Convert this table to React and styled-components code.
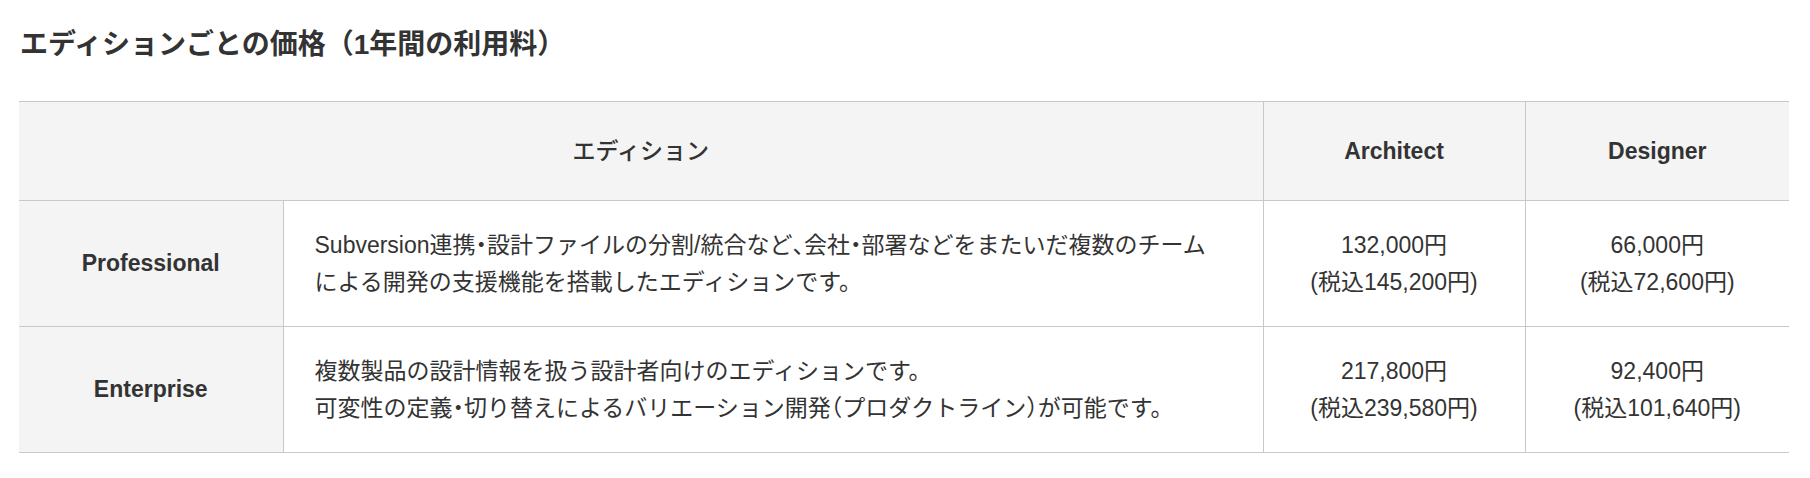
import styled, { createGlobalStyle } from 'styled-components';

const GlobalStyle = createGlobalStyle`
    body {
        margin: 0;
        background: #fff;
        color: #333;
        font-family: "Liberation Sans", Arial, "Noto Sans CJK JP", sans-serif;
    }
`;

const Section = styled.section`
    padding: 23px 21px 0 19px;
`;

const Title = styled.h2`
    margin: 0 0 35px 1px;
    font-size: 28px;
    line-height: 43px;
    font-weight: 700;
    color: #333;
`;

const PriceTable = styled.table`
    width: 1770px;
    border-collapse: collapse;
    table-layout: fixed;
    font-size: 23px;
    line-height: 37px;
`;

const Row = styled.tr`
    border-top: 1px solid #c8c8c8;
    border-bottom: 1px solid #c8c8c8;
`;

const HeadCell = styled.th`
    height: 98px;
    padding: 0;
    background: #f4f4f4;
    font-weight: ${p => (p.$jp ? 500 : 700)};
    text-align: center;
    vertical-align: middle;
    & + & {
        border-left: 1px solid #c8c8c8;
    }
`;

const EditionCell = styled.th`
    height: 125px;
    padding: 0;
    background: #f4f4f4;
    font-weight: 700;
    text-align: center;
    border-right: 1px solid #c8c8c8;
`;

const DescCell = styled.td`
    padding: 0 20px 0 31px;
    border-right: 1px solid #c8c8c8;
    vertical-align: middle;
    white-space: nowrap;
`;

const PriceCell = styled.td`
    padding: 0;
    text-align: center;
    vertical-align: middle;
    & + & {
        border-left: 1px solid #c8c8c8;
    }
`;

// 約物を半角幅で組む
const Punct = styled.span`
    font-feature-settings: "halt";
`;

const rows = [
    {
        name: 'Professional',
        desc: ['Subversion連携・設計ファイルの分割/統合など、会社・部署などをまたいだ複数のチーム', 'による開発の支援機能を搭載したエディションです。'],
        architect: ['132,000円', '(税込145,200円)'],
        designer: ['66,000円', '(税込72,600円)'],
    },
    {
        name: 'Enterprise',
        desc: ['複数製品の設計情報を扱う設計者向けのエディションです。', '可変性の定義・切り替えによるバリエーション開発（プロダクトライン）が可能です。'],
        architect: ['217,800円', '(税込239,580円)'],
        designer: ['92,400円', '(税込101,640円)'],
    },
];

const tighten = text =>
    text.split(/([・、（）])/).map((s, i) =>
        /^[・、（）]$/.test(s) ? <Punct key={i}>{s}</Punct> : s
    );

const Lines = ({ lines, tight }) => (
    <>
        {lines.map((l, i) => (
            <span key={i}>
                {tight ? tighten(l) : l}
                {i < lines.length - 1 && <br />}
            </span>
        ))}
    </>
);

const App = () => {
    return (
        <Section>
            <GlobalStyle />
            <Title>エディションごとの価格（1年間の利用料）</Title>
            <PriceTable>
                <colgroup>
                    <col style={{ width: 264 }} />
                    <col style={{ width: 980 }} />
                    <col style={{ width: 262 }} />
                    <col style={{ width: 264 }} />
                </colgroup>
                <thead>
                    <Row>
                        <HeadCell $jp colSpan={2}>エディション</HeadCell>
                        <HeadCell>Architect</HeadCell>
                        <HeadCell>Designer</HeadCell>
                    </Row>
                </thead>
                <tbody>
                    {rows.map(r => (
                        <Row key={r.name}>
                            <EditionCell>{r.name}</EditionCell>
                            <DescCell><Lines lines={r.desc} tight /></DescCell>
                            <PriceCell><Lines lines={r.architect} /></PriceCell>
                            <PriceCell><Lines lines={r.designer} /></PriceCell>
                        </Row>
                    ))}
                </tbody>
            </PriceTable>
        </Section>
    );
};

export default App;
